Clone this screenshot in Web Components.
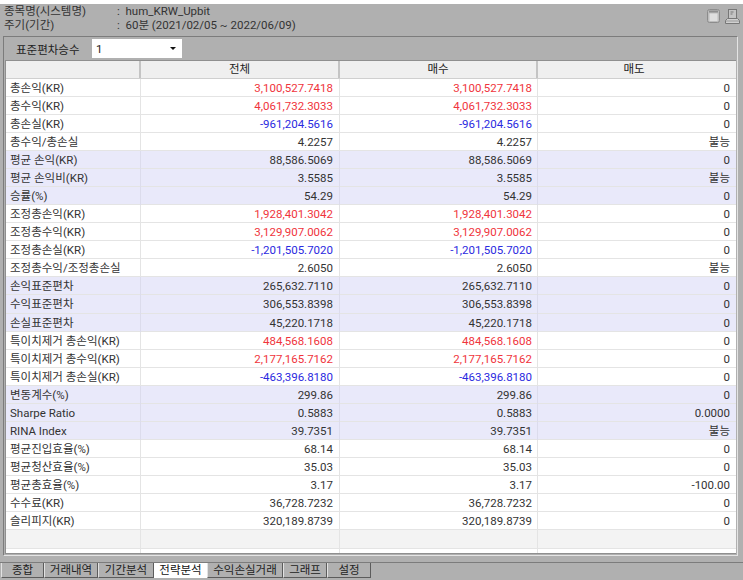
<!DOCTYPE html>
<html lang="ko">
<head>
<meta charset="utf-8">
<title>전략분석</title>
<style>
  html, body { margin: 0; padding: 0; background: #fff; }
  body { width: 743px; height: 580px; overflow: hidden; font: 11.5px Roboto, "Noto Sans CJK KR", sans-serif; color: #333; }
</style>
</head>
<body>
<report-window>
  <info-header slot="head" name="hum_KRW_Upbit" period="60분 (2021/02/05 ~ 2022/06/09)"></info-header>
  <std-toolbar slot="tools" label="표준편차승수" value="1"></std-toolbar>
  <result-grid slot="grid"></result-grid>
  <tab-bar slot="tabs"></tab-bar>
</report-window>

<script>
const ROWS = [
  ['총손익(KR)', '3,100,527.7418', '3,100,527.7418', '0', 'r', 0],
  ['총수익(KR)', '4,061,732.3033', '4,061,732.3033', '0', 'r', 0],
  ['총손실(KR)', '-961,204.5616', '-961,204.5616', '0', 'b', 0],
  ['총수익/총손실', '4.2257', '4.2257', '불능', '', 0],
  ['평균 손익(KR)', '88,586.5069', '88,586.5069', '0', '', 1],
  ['평균 손익비(KR)', '3.5585', '3.5585', '불능', '', 1],
  ['승률(%)', '54.29', '54.29', '0', '', 1],
  ['조정총손익(KR)', '1,928,401.3042', '1,928,401.3042', '0', 'r', 0],
  ['조정총수익(KR)', '3,129,907.0062', '3,129,907.0062', '0', 'r', 0],
  ['조정총손실(KR)', '-1,201,505.7020', '-1,201,505.7020', '0', 'b', 0],
  ['조정총수익/조정총손실', '2.6050', '2.6050', '불능', '', 0],
  ['손익표준편차', '265,632.7110', '265,632.7110', '0', '', 1],
  ['수익표준편차', '306,553.8398', '306,553.8398', '0', '', 1],
  ['손실표준편차', '45,220.1718', '45,220.1718', '0', '', 1],
  ['특이치제거 총손익(KR)', '484,568.1608', '484,568.1608', '0', 'r', 0],
  ['특이치제거 총수익(KR)', '2,177,165.7162', '2,177,165.7162', '0', 'r', 0],
  ['특이치제거 총손실(KR)', '-463,396.8180', '-463,396.8180', '0', 'b', 0],
  ['변동계수(%)', '299.86', '299.86', '0', '', 1],
  ['Sharpe Ratio', '0.5883', '0.5883', '0.0000', '', 1],
  ['RINA Index', '39.7351', '39.7351', '불능', '', 1],
  ['평균진입효율(%)', '68.14', '68.14', '0', '', 0],
  ['평균청산효율(%)', '35.03', '35.03', '0', '', 0],
  ['평균총효율(%)', '3.17', '3.17', '-100.00', '', 0],
  ['수수료(KR)', '36,728.7232', '36,728.7232', '0', '', 0],
  ['슬리피지(KR)', '320,189.8739', '320,189.8739', '0', '', 0],
];
const TABS = [['종합', 43], ['거래내역', 54], ['기간분석', 56], ['전략분석', 53], ['수익손실거래', 76], ['그래프', 44], ['설정', 44]];
const ACTIVE_TAB = '전략분석';

class ReportWindow extends HTMLElement {
  connectedCallback() {
    this.attachShadow({ mode: 'open' });
    this.shadowRoot.innerHTML = `
      <style>
        :host { display: flex; flex-direction: column; width: 743px; height: 580px; box-sizing: border-box; padding-top: 4px; background: #fff; }
        .body { flex: 1; display: flex; flex-direction: column; background: #b0b0b0; min-height: 0; }
        .panel { width: 735px; margin-left: 3px; border-top: 1px solid #7c7c7c; border-left: 1px solid #7c7c7c; border-right: 1px solid #e4e4e4;
          border-bottom: 1px solid #e4e4e4; height: 520px; box-sizing: border-box; padding: 0 1px 1px 1px; display: flex; flex-direction: column; }
        .line { height: 1px; background: #7c7c7c; margin-top: 6px; flex: none; }
      </style>
      <div class="body">
        <slot name="head"></slot>
        <div class="panel">
          <slot name="tools"></slot>
          <slot name="grid"></slot>
        </div>
        <div class="line"></div>
        <slot name="tabs"></slot>
      </div>`;
  }
}

class InfoHeader extends HTMLElement {
  connectedCallback() {
    const name = this.getAttribute('name'), period = this.getAttribute('period');
    this.attachShadow({ mode: 'open' });
    this.shadowRoot.innerHTML = `
      <style>
        :host { display: flex; height: 32px; flex: none; box-sizing: border-box; padding: 0 3px 0 4px; color: #333; line-height: 14px; }
        .info { flex: 1; display: grid; grid-template-columns: 113px 1fr; grid-auto-rows: 13.5px; }
        .icons { display: flex; gap: 5px; padding-top: 5px; }
        svg { display: block; }
      </style>
      <div class="info">
        <span>종목명(시스템명)</span><span>:&nbsp; ${name}</span>
        <span>주기(기간)</span><span>:&nbsp; ${period}</span>
      </div>
      <div class="icons">
        <svg width="13" height="14" viewBox="0 0 13 14"><rect x=".5" y=".5" width="12" height="13" rx="2" fill="#bcbcbc" stroke="#8c8c8c"/><rect x="2" y="1.5" width="9" height="2" fill="#8e8e8e"/><rect x="2.5" y="4.5" width="8" height="7.5" fill="#dedede"/></svg>
        <svg width="15" height="15" viewBox="0 0 15 15"><rect x="3.5" y=".5" width="8" height="9" fill="#c4c4c4" stroke="#777"/><path d="M5.5 3h3M5.5 5h2" stroke="#777"/><path d="M.5 14.5v-3l2-2h10l2 2v3z" fill="#d0d0d0" stroke="#777"/><path d="M1 12h13" stroke="#999"/></svg>
      </div>`;
  }
}

class StdToolbar extends HTMLElement {
  connectedCallback() {
    this.attachShadow({ mode: 'open' });
    this.shadowRoot.innerHTML = `
      <style>
        :host { display: flex; align-items: center; height: 23px; flex: none; padding-left: 11px; color: #222; }
        .lbl { width: 76px; }
        .combo { width: 90px; height: 19px; box-sizing: border-box; background: #fff; display: flex; align-items: center; justify-content: space-between; padding: 0 6px 0 4px; }
        .arrow { width: 0; height: 0; border: 3px solid transparent; border-top-color: #111; border-bottom: 0; }
      </style>
      <span class="lbl">${this.getAttribute('label')}</span>
      <div class="combo"><span>${this.getAttribute('value')}</span><i class="arrow"></i></div>`;
  }
}

class ResultGrid extends HTMLElement {
  connectedCallback() {
    this.attachShadow({ mode: 'open' });
    const cols = '135px 199px 198px 1fr';
    const rows = ROWS.map(([label, a, b, c, tone, band]) => `
      <div class="row ${band ? 'band' : ''}">
        <div class="cell lab">${label}</div>
        <div class="cell ${tone}">${a}</div>
        <div class="cell ${tone} mid">${b}</div>
        <div class="cell">${c}</div>
      </div>`).join('');
    const blank = `<div class="cell"></div>`.repeat(4);
    this.shadowRoot.innerHTML = `
      <style>
        :host { display: block; flex: 1; min-height: 0; background: #fff; border-top: 1px solid #8f8f8f; border-left: 1px solid #8f8f8f; border-bottom: 1px solid #8f8f8f; overflow: hidden; }
        .row { display: grid; grid-template-columns: ${cols}; height: 18.08px; box-sizing: border-box; border-bottom: 1px solid #e4e4e4; line-height: 18.5px; }
        .head { background: #efefef; height: 17.5px; border-bottom: 1px solid #cfcfcf; }
        .head .cell { text-align: center; border-right: 2px solid #c4c4c4; padding: 0; line-height: 17px; color: #222; }
        .head .cell:last-child { border-right: 0; }
        .cell { text-align: right; padding-right: 6px; border-right: 1px solid #e4e4e4; white-space: nowrap; color: #333; min-width: 0; }
        .cell.mid { padding-right: 5px; }
        .cell:last-child { border-right: 0; padding-right: 6px; }
        .cell.r { color: #f0343c; }
        .cell.b { color: #2a2ae0; }
        .lab { text-align: left; padding: 0 0 0 4px; }
        .band { background: #e9e9fa; }
        .band .cell { border-right-color: #dcdcec; }
        .blank { background: #f3f3f3; }
      </style>
      <div class="row head">
        <div class="cell"></div><div class="cell">전체</div><div class="cell">매수</div><div class="cell">매도</div>
      </div>
      ${rows}
      <div class="row blank">${blank}</div>
      <div class="row">${blank}</div>`;
  }
}

class TabBar extends HTMLElement {
  connectedCallback() {
    this.attachShadow({ mode: 'open' });
    const tabs = TABS.map(([t, w]) => `<div class="tab ${t === ACTIVE_TAB ? 'on' : ''}" style="width:${w}px">${t}</div>`).join('');
    this.shadowRoot.innerHTML = `
      <style>
        :host { display: flex; align-items: flex-start; padding: 0 0 0 1px; flex: none; height: 17px; background: #b0b0b0; }
        .tab { line-height: 15px; text-align: center; border-right: 1px solid #5c5c5c; border-left: 1px solid #e2e2e2; border-bottom: 1px solid #5c5c5c; color: #222; flex: none; box-sizing: border-box; height: 15px; }
        .tab.on { background: #fff; border-color: #fff; color: #111; }
      </style>
      ${tabs}`;
  }
}

customElements.define('report-window', ReportWindow);
customElements.define('info-header', InfoHeader);
customElements.define('std-toolbar', StdToolbar);
customElements.define('result-grid', ResultGrid);
customElements.define('tab-bar', TabBar);
</script>
</body>
</html>
